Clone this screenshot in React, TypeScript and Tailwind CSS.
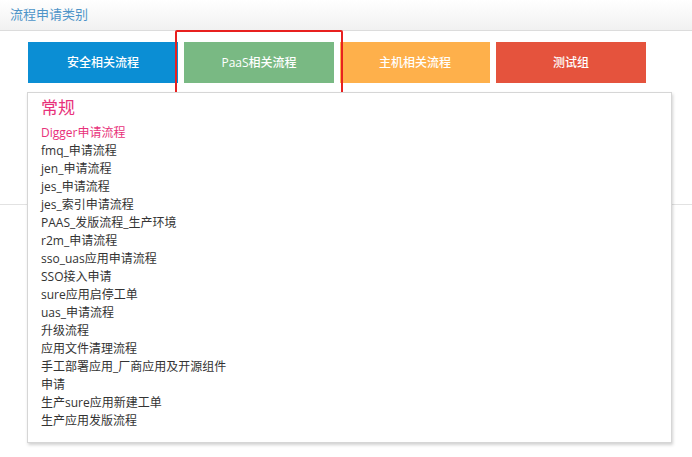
import React from 'react';

const categories = [
  { name: '安全相关流程', color: 'bg-[#0b8ed4]' },
  { name: 'PaaS相关流程', color: 'bg-[#79b983]' },
  { name: '主机相关流程', color: 'bg-[#feb04b]' },
  { name: '测试组', color: 'bg-[#e5533d]' },
];

const flows = [
  'Digger申请流程',
  'fmq_申请流程',
  'jen_申请流程',
  'jes_申请流程',
  'jes_索引申请流程',
  'PAAS_发版流程_生产环境',
  'r2m_申请流程',
  'sso_uas应用申请流程',
  'SSO接入申请',
  'sure应用启停工单',
  'uas_申请流程',
  '升级流程',
  '应用文件清理流程',
  '手工部署应用_厂商应用及开源组件',
  '申请',
  '生产sure应用新建工单',
  '生产应用发版流程',
];

export default function App() {
  return (
    <div
      className="relative w-[692px] h-[457px] overflow-hidden bg-white"
      style={{ fontFamily: '"Open Sans", "Noto Sans CJK SC", sans-serif' }}
    >
      {/* Header */}
      <div className="h-[31px] px-[10px] flex items-center border-b border-[#dcdcdc] bg-gradient-to-b from-white to-[#f1f1f1]">
        <span className="text-[13px] text-[#4d94c8]">流程申请类别</span>
      </div>

      {/* Category buttons */}
      <div className="flex gap-[6px] pl-[28px] pt-[11px]">
        {categories.map((c) => (
          <div
            key={c.name}
            className={`w-[150px] h-[41px] flex items-center justify-center text-white text-[12px] font-medium ${c.color}`}
          >
            {c.name}
          </div>
        ))}
      </div>

      {/* Page divider behind the dropdown */}
      <div className="mt-[121px] border-b border-[#e2e2e2]" />

      {/* Highlight box */}
      <div className="absolute left-[175px] top-[30px] w-[168px] h-[77px] border-2 border-[#e8201f] rounded-[2px]" />

      {/* Dropdown */}
      <div className="absolute left-[27px] top-[92px] w-[645px] h-[351px] bg-white border border-[#d6d6d6] shadow-[1px_2px_3px_rgba(0,0,0,0.18)] pl-[13px] pt-[4px]">
        <h2 className="text-[17px] leading-[22px] text-[#e8317a]">常规</h2>
        <ul className="mt-[5px]">
          {flows.map((f, i) => (
            <li
              key={f}
              className={`text-[12px] leading-[18px] ${i === 0 ? 'text-[#e8317a]' : 'text-[#333]'}`}
            >
              {f}
            </li>
          ))}
        </ul>
      </div>
    </div>
  );
}
